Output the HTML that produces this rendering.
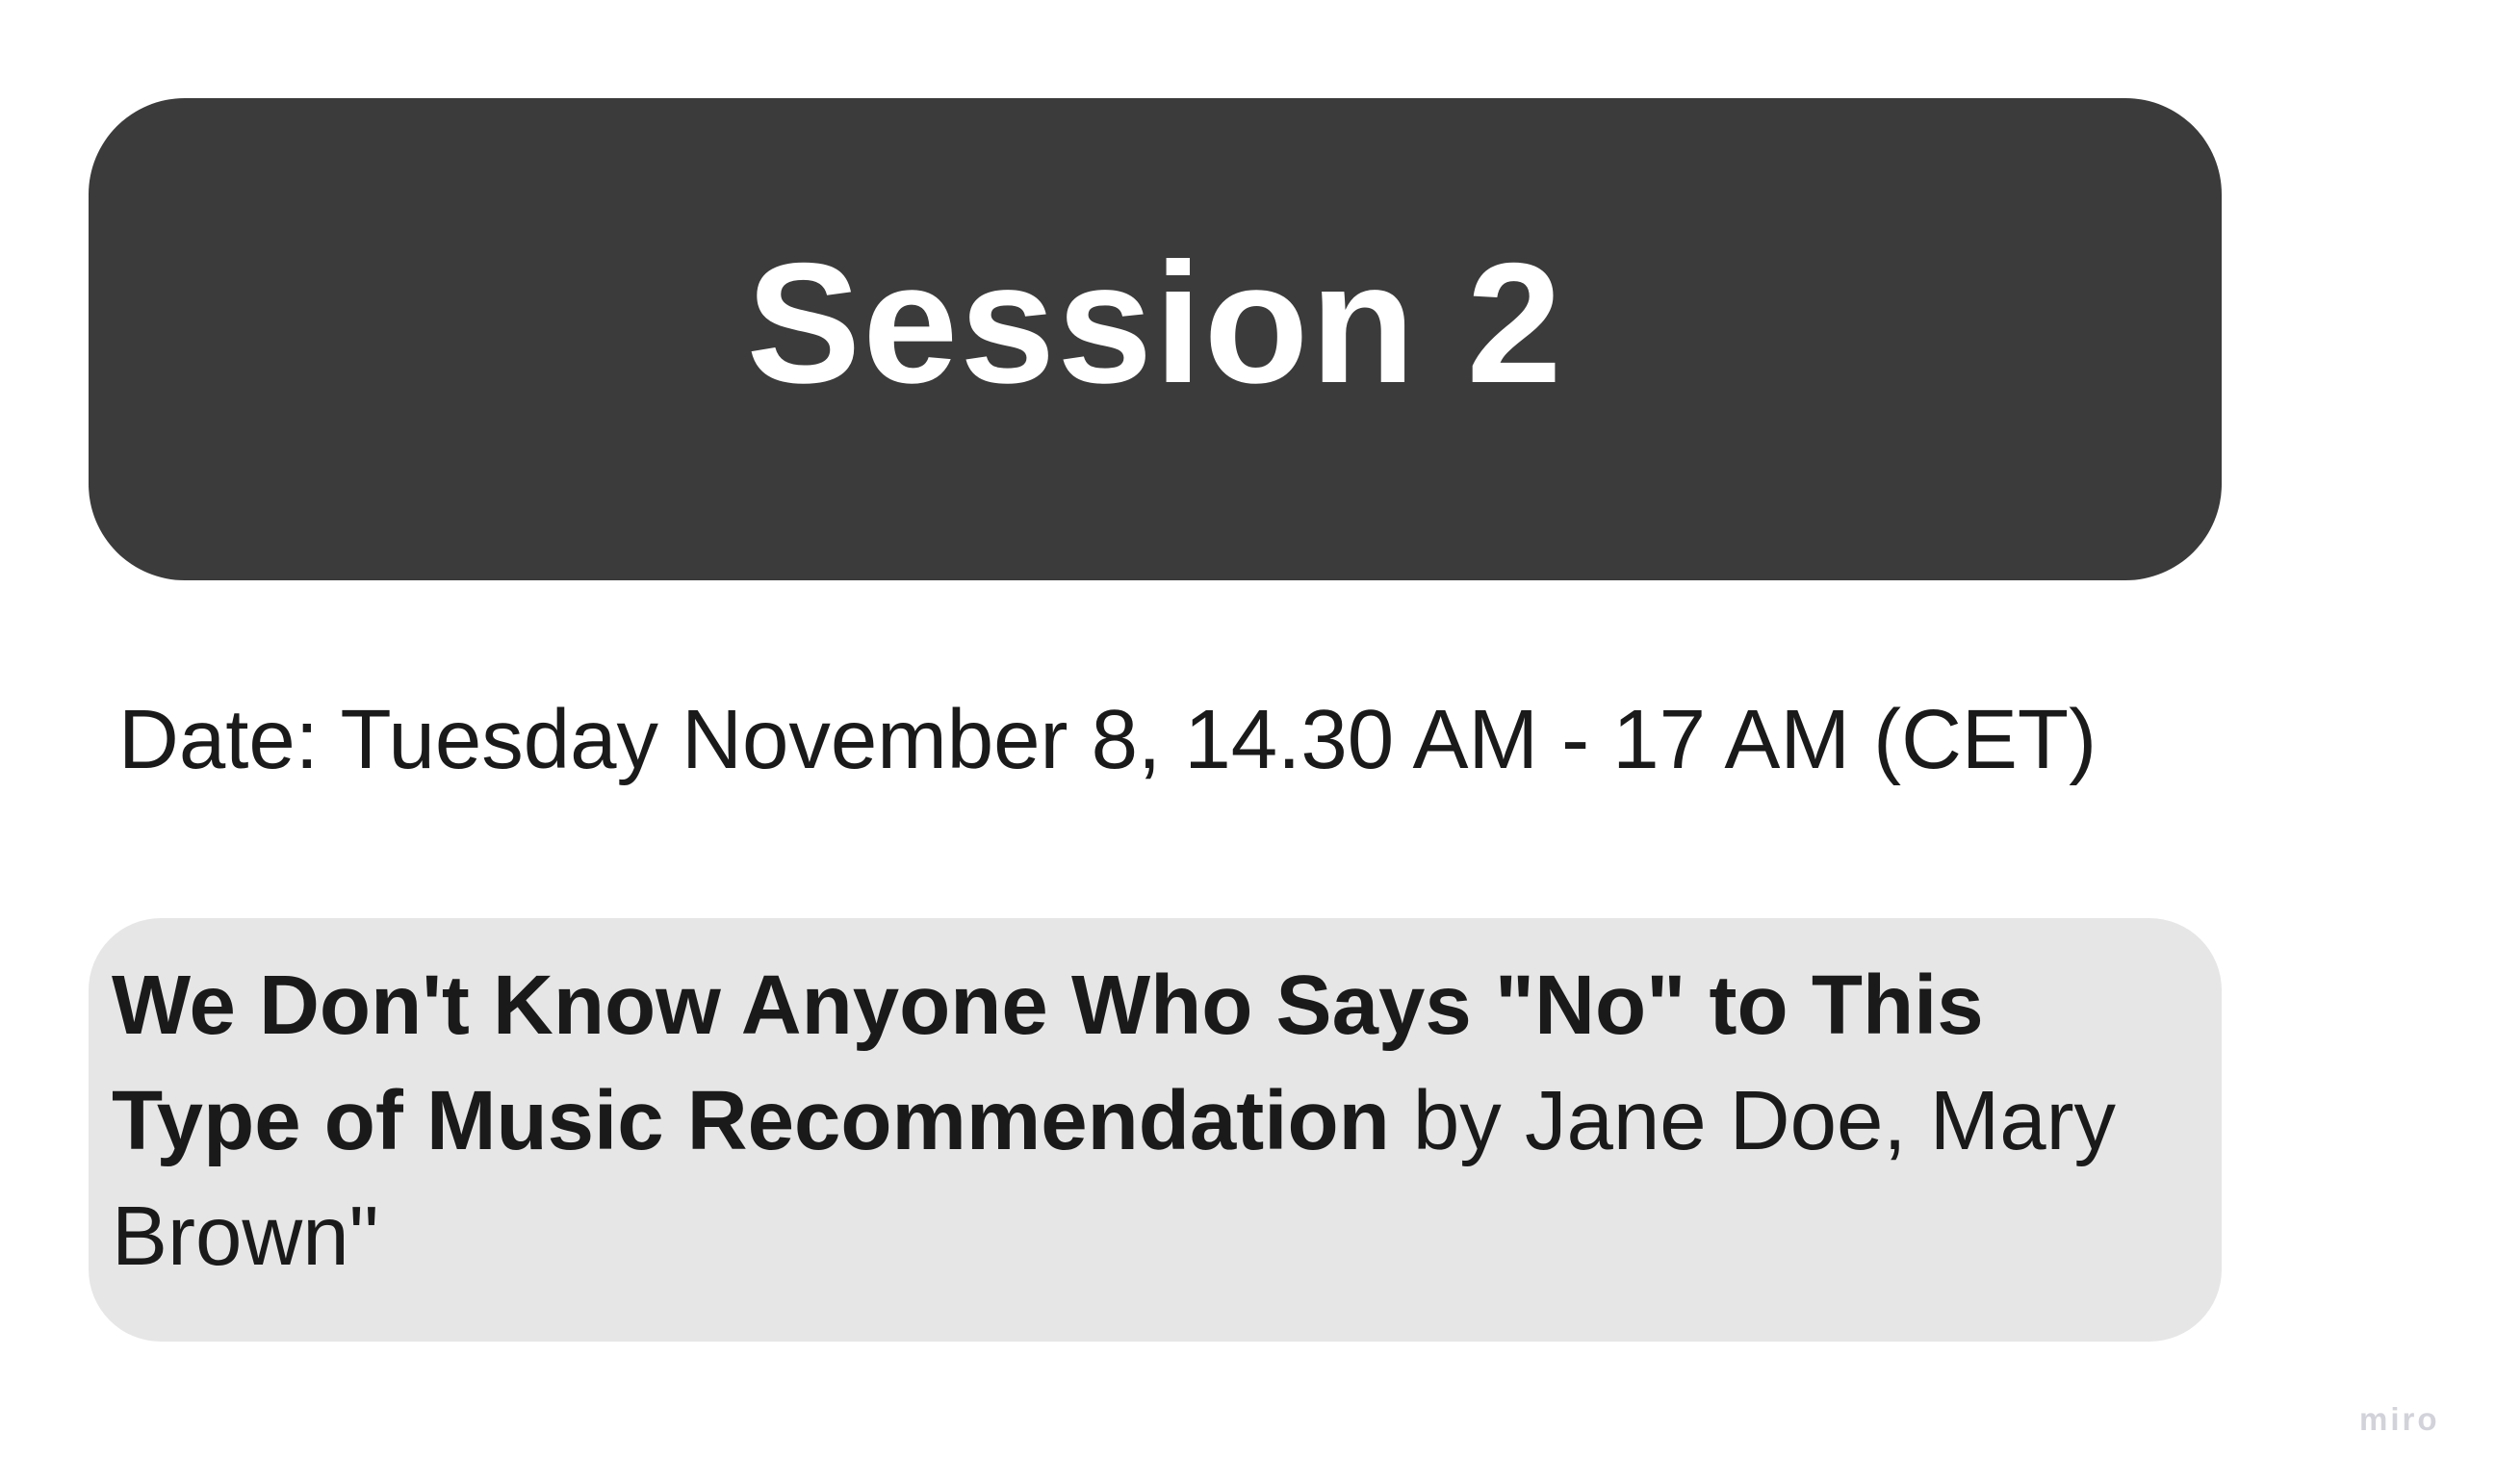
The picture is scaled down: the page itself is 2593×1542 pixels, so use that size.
<!DOCTYPE html>
<html><head><meta charset="utf-8"><style>
html,body{margin:0;padding:0;background:#fff;width:2593px;height:1542px;overflow:hidden;position:relative;font-family:"Liberation Sans",sans-serif;}
.dark{position:absolute;left:92px;top:102px;width:2216px;height:501px;background:#3b3b3b;border-radius:100px;}
.title{position:absolute;left:92px;width:2216px;top:236px;text-align:center;color:#fff;font-weight:bold;font-size:178px;line-height:200px;letter-spacing:2px;}
.date{position:absolute;left:123px;top:714px;font-size:87px;color:#1a1a1a;white-space:nowrap;line-height:110px;}
.gray{position:absolute;left:92px;top:954px;width:2216px;height:440px;background:#e6e6e6;border-radius:75px;}
.txt{position:absolute;left:116px;top:985px;font-size:87px;line-height:120px;color:#1a1a1a;white-space:nowrap;}
.miro{position:absolute;left:2451px;top:1456px;font-size:33px;font-weight:bold;color:#d2d2da;letter-spacing:3px;}
</style></head><body>
<div class="dark"></div>
<div class="title">Session 2</div>
<div class="date">Date: Tuesday November 8, 14.30 AM - 17 AM (CET)</div>
<div class="gray"></div>
<div class="txt"><b>We Don't Know Anyone Who Says "No" to This</b><br><b>Type of Music Recommendation</b> by Jane Doe, Mary<br>Brown"</div>
<div class="miro">miro</div>
</body></html>
